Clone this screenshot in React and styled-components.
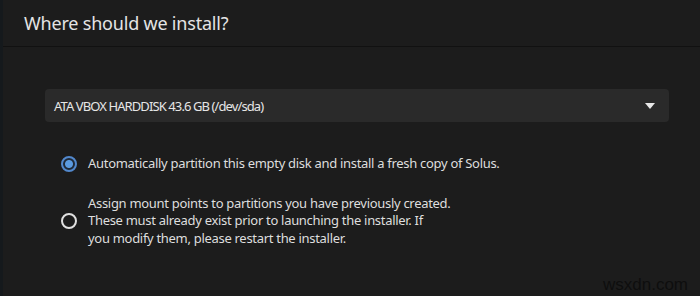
import styled, { createGlobalStyle } from "styled-components";

const Global = createGlobalStyle`
  html, body {
    margin: 0;
    padding: 0;
    background: #1c1c1c;
  }
  body {
    font-family: "Noto Sans", "DejaVu Sans", sans-serif;
  }
`;

const Window = styled.div`
  width: 700px;
  height: 296px;
  display: flex;
  background: #1c1c1c;
  overflow: hidden;
`;

const EdgeStrip = styled.div`
  width: 3px;
  background: #15191c;
  flex-shrink: 0;
`;

const Page = styled.div`
  flex: 1;
  display: flex;
  flex-direction: column;
`;

const Header = styled.div`
  height: 47px;
  display: flex;
  align-items: center;
  padding-left: 21px;
  border-bottom: 1px solid #111;
  box-sizing: border-box;
`;

const Title = styled.h1`
  margin: 0;
  font-size: 18px;
  font-weight: 400;
  color: #e4e4e4;
  letter-spacing: -0.2px;
`;

const Body = styled.div`
  flex: 1;
  display: flex;
  flex-direction: column;
  padding: 42px 31px 0 42px;
  position: relative;
`;

const Select = styled.div`
  height: 33px;
  background: #2a2a2a;
  border-radius: 4px;
  display: flex;
  align-items: center;
  justify-content: space-between;
  padding: 0 14px 0 9px;
`;

const SelectText = styled.span`
  font-size: 13px;
  color: #e6e6e6;
  letter-spacing: -0.9px;
`;

const Options = styled.div`
  display: flex;
  flex-direction: column;
  gap: 22px;
  margin-top: 33px;
  padding-left: 16px;
`;

const Option = styled.div`
  display: flex;
  align-items: center;
  gap: 11px;
`;

const Radio = styled.span`
  width: 16px;
  height: 16px;
  border-radius: 50%;
  box-sizing: border-box;
  flex-shrink: 0;
  border: 2px solid ${(p) => (p.checked ? "#5288cc" : "#e0e0e0")};
  background: ${(p) =>
    p.checked ? "radial-gradient(circle, #5b9be0 0 3.5px, #1f2a38 4.5px)" : "transparent"};
`;

const Label = styled.span`
  font-size: 13px;
  line-height: 17.5px;
  color: #dedede;
  letter-spacing: -0.3px;
`;

const Watermark = styled.span`
  position: absolute;
  right: 12px;
  bottom: 1px;
  font-family: "Liberation Sans", sans-serif;
  font-size: 17px;
  color: #0e0e0e;
`;

export default function App() {
  return (
    <Window>
      <Global />
      <EdgeStrip />
      <Page>
        <Header>
          <Title>Where should we install?</Title>
        </Header>
        <Body>
          <Select>
            <SelectText>ATA VBOX HARDDISK 43.6 GB (/dev/sda)</SelectText>
            <svg width="10" height="6" viewBox="0 0 10 6">
              <path d="M0 0 H10 L5 6 Z" fill="#e8e8e8" />
            </svg>
          </Select>
          <Options>
            <Option>
              <Radio checked />
              <Label>Automatically partition this empty disk and install a fresh copy of Solus.</Label>
            </Option>
            <Option>
              <Radio />
              <Label>
                Assign mount points to partitions you have previously created.
                <br />
                These must already exist prior to launching the installer. If
                <br />
                you modify them, please restart the installer.
              </Label>
            </Option>
          </Options>
          <Watermark>wsxdn.com</Watermark>
        </Body>
      </Page>
    </Window>
  );
}
